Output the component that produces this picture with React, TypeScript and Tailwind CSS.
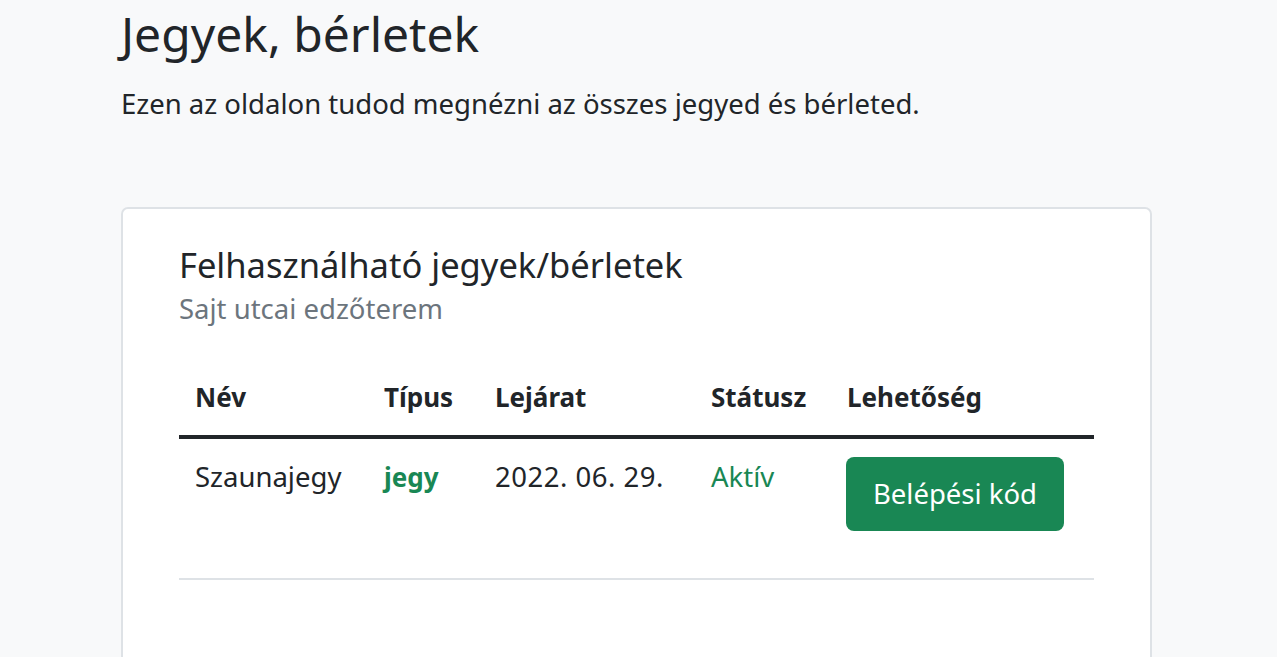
export default function App() {
  const cols = [
    { label: 'Név', w: 'w-[189px]' },
    { label: 'Típus', w: 'w-[111px]' },
    { label: 'Lejárat', w: 'w-[216px]' },
    { label: 'Státusz', w: 'w-[136px]' },
    { label: 'Lehetőség', w: 'w-[263px]' },
  ];

  return (
    <div className="h-screen bg-[#f8f9fa] text-[#212529] font-['Noto_Sans',sans-serif] overflow-hidden">
      <div className="ml-[121px] w-[1031px]">
        <h1 className="pt-[2px] text-[48px] leading-[64px] font-normal">Jegyek, bérletek</h1>
        <p className="mt-[20px] text-[27.5px] leading-[36px]">
          Ezen az oldalon tudod megnézni az összes jegyed és bérleted.
        </p>

        <div className="mt-[85px] h-[500px] rounded-[7px] border-2 border-[#dee2e6] bg-white px-[56px] pt-[32px]">
          <h5 className="text-[34.5px] leading-[48px]">Felhasználható jegyek/bérletek</h5>
          <h6 className="mt-[2px] text-[27.5px] leading-[36px] text-[#6c757d]">Sajt utcai edzőterem</h6>

          <table className="mt-[36px] w-[915px] border-collapse text-[27.5px]">
            <thead>
              <tr className="border-b-4 border-[#212529]">
                {cols.map((c) => (
                  <th key={c.label} className={`${c.w} px-4 pb-[20px] pt-[16px] text-left text-[26px] font-bold leading-[36px]`}>
                    {c.label}
                  </th>
                ))}
              </tr>
            </thead>
            <tbody>
              <tr className="border-b-2 border-[#dee2e6] align-top">
                <td className="px-4 pt-[20px] leading-[36px]">Szaunajegy</td>
                <td className="px-4 pt-[20px] text-[26px] font-bold leading-[36px] text-[#198754]">jegy</td>
                <td className="px-4 pt-[20px] leading-[36px] tracking-[0.5px]">2022. 06. 29.</td>
                <td className="px-4 pt-[20px] leading-[36px] text-[#198754]">Aktív</td>
                <td className="pl-[15px] pt-[18px] pb-[47px]">
                  <button className="h-[74px] w-[218px] rounded-[8px] bg-[#198754] text-[27.5px] text-white">
                    Belépési kód
                  </button>
                </td>
              </tr>
            </tbody>
          </table>
        </div>
      </div>
    </div>
  );
}
